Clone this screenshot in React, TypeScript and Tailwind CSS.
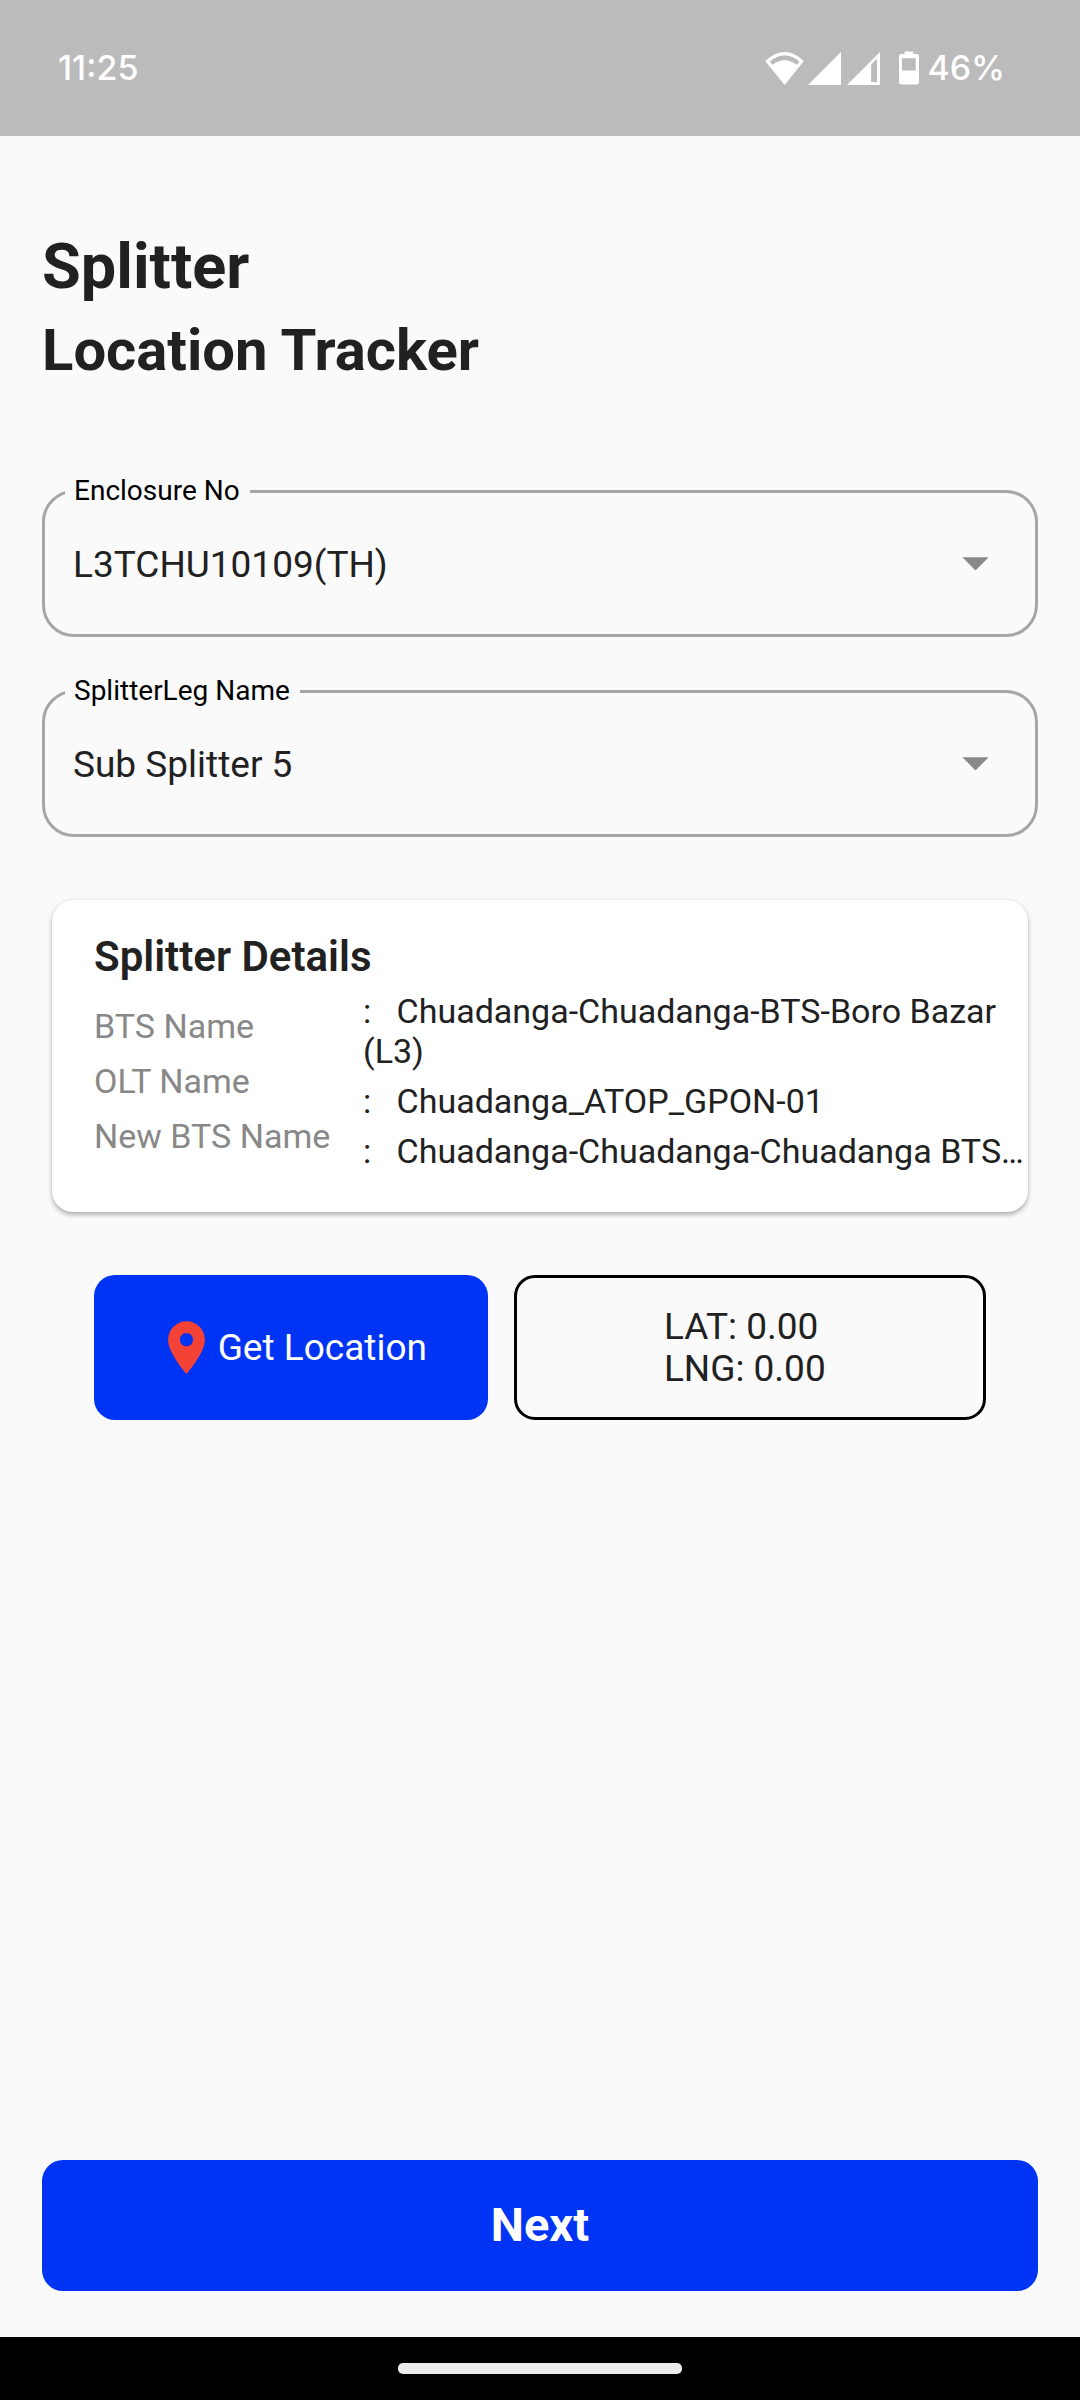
import { useState } from "react";

function WifiIcon() {
  return (
    <svg viewBox="79 63 115 98" className="h-[33px] w-[39px]" fill="currentColor" aria-hidden="true">
      <path
        fillRule="evenodd"
        d="M79 90Q137 36 194 90L137 161ZM93 91L101 101Q137 74 173 101L181 91Q137 56 93 91Z"
      />
    </svg>
  );
}

function SignalIcon({ partial = false }: { partial?: boolean }) {
  return (
    <svg viewBox="0 0 97 97" className="size-[33px]" fill="currentColor" aria-hidden="true">
      <path
        fillRule="evenodd"
        d={partial ? "M0 97L97 0V97ZM71 37V88H88V20Z" : "M0 97L97 0V97Z"}
      />
    </svg>
  );
}

function BatteryIcon() {
  return (
    <svg viewBox="0 0 61 101" className="h-[34px] w-5" fill="currentColor" aria-hidden="true">
      <path
        fillRule="evenodd"
        d="M17 0H43V8H54Q61 8 61 15V94Q61 101 54 101H7Q0 101 0 94V15Q0 8 7 8H17ZM9 21V58H51V21Z"
      />
    </svg>
  );
}

function SelectField({ id, label, options }: { id: string; label: string; options: string[] }) {
  const [value, setValue] = useState(options[0]);
  return (
    <fieldset className="rounded-[32px] border-3 border-[#a6a6a6]">
      <legend className="ml-5 pr-[10px] pb-px pl-[9px] text-[28px] leading-[31px] text-black">
        <label htmlFor={id}>{label}</label>
      </legend>
      <div className="relative">
        <select
          id={id}
          value={value}
          onChange={(e) => setValue(e.target.value)}
          className="h-[127px] w-full appearance-none rounded-[28px] bg-transparent pr-24 pb-3 pl-7 text-[37px] text-[#212121] outline-none"
        >
          {options.map((option) => (
            <option key={option}>{option}</option>
          ))}
        </select>
        <svg
          viewBox="0 0 24 24"
          className="pointer-events-none absolute top-6 right-7 size-[63px] text-[#898989]"
          fill="currentColor"
          aria-hidden="true"
        >
          <path d="M7 10l5 5 5-5z" />
        </svg>
      </div>
    </fieldset>
  );
}

const labels = ["BTS Name", "OLT Name", "New BTS Name"];

export default function App() {
  return (
    <div className="flex min-h-screen flex-col bg-[#fafafa] font-['Roboto',sans-serif] text-[#212121]">
      <header className="flex h-[136px] items-center justify-between bg-[#bbbbbb] pr-[75px] pl-[58px] font-['Inter',sans-serif] text-[34px] leading-[44px] font-medium text-white">
        <time>11:25</time>
        <div className="flex items-center">
          <WifiIcon />
          <div className="ml-1 flex gap-[6px]">
            <SignalIcon />
            <SignalIcon partial />
          </div>
          <div className="ml-[19px] flex items-center gap-[9px]">
            <BatteryIcon />
            <span>46%</span>
          </div>
        </div>
      </header>

      <main className="flex flex-1 flex-col px-[42px] pt-[94px] pb-[46px]">
        <h1 className="font-bold">
          <span className="block text-[63px] leading-[74px]">Splitter</span>
          <span className="mt-3 block text-[58px] leading-[68px]">Location Tracker</span>
        </h1>

        <div className="mt-[91px] flex flex-col gap-[38px]">
          <SelectField id="enclosure" label="Enclosure No" options={["L3TCHU10109(TH)"]} />
          <SelectField id="leg" label="SplitterLeg Name" options={["Sub Splitter 5"]} />
        </div>

        <section className="mx-[10px] mt-[63px] rounded-[21px] bg-white pt-8 pb-[41px] pl-[42px] shadow-[0_3px_5px_rgba(0,0,0,0.28),0_0_3px_rgba(0,0,0,0.08)]">
          <h2 className="text-[42px] leading-[49px] font-semibold">Splitter Details</h2>
          <div className="mt-[10px] flex items-center text-[34px] leading-10">
            <div className="flex w-[269px] shrink-0 flex-col gap-[15px] text-[#888888]">
              {labels.map((label) => (
                <p key={label}>{label}</p>
              ))}
            </div>
            <div className="flex min-w-0 flex-1 flex-col gap-[10px] whitespace-pre-wrap">
              <p>{":   Chuadanga-Chuadanga-BTS-Boro Bazar (L3)"}</p>
              <p>{":   Chuadanga_ATOP_GPON-01"}</p>
              <p className="whitespace-pre">{":   Chuadanga-Chuadanga-Chuadanga BTS…"}</p>
            </div>
          </div>
        </section>

        <div className="mx-[52px] mt-[63px] grid h-[145px] grid-cols-[5fr_6fr] gap-[26px] text-[37px] leading-[42px]">
          <button
            type="button"
            className="flex items-center justify-center rounded-[21px] bg-[#0034f4] text-white"
          >
            <svg viewBox="0 0 24 24" className="size-[63px] text-[#f44336]" fill="currentColor" aria-hidden="true">
              <path d="M12 2C8.13 2 5 5.13 5 9c0 5.25 7 13 7 13s7-7.75 7-13c0-3.87-3.13-7-7-7zm0 9.5c-1.38 0-2.5-1.12-2.5-2.5s1.12-2.5 2.5-2.5 2.5 1.12 2.5 2.5-1.12 2.5-2.5 2.5z" />
            </svg>
            Get Location
          </button>
          <div className="flex items-center justify-center rounded-[21px] border-3 border-black pr-[10px]">
            <div>
              <p>LAT: 0.00</p>
              <p>LNG: 0.00</p>
            </div>
          </div>
        </div>

        <button
          type="button"
          className="mt-auto h-[131px] rounded-[21px] bg-[#0034f4] text-[47px] font-bold text-white"
        >
          Next
        </button>
      </main>

      <footer className="flex h-[63px] justify-center bg-black pt-[26px]">
        <div className="h-[11px] w-[284px] rounded-[5px] bg-[#ececec]" />
      </footer>
    </div>
  );
}
